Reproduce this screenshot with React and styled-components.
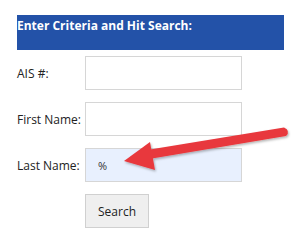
import React from 'react';
import styled, { createGlobalStyle } from 'styled-components';

const Global = createGlobalStyle`
  html, body {
    margin: 0;
    padding: 0;
    background: #ffffff;
  }
  body {
    font-family: "Open Sans", "Liberation Sans", sans-serif;
    color: #222;
  }
`;

const Page = styled.div`
  position: relative;
  width: 300px;
  height: 238px;
  padding: 15px 0 0 17px;
  box-sizing: border-box;
`;

const Header = styled.div`
  width: 267px;
  height: 35px;
  background: #2352a8;
  color: #ffffff;
  font-weight: 700;
  font-size: 12px;
  line-height: 16px;
  padding-top: 3px;
  box-sizing: border-box;
`;

const Form = styled.div`
  display: grid;
  grid-template-columns: 68px 157px;
  grid-auto-rows: 34px;
  row-gap: 12px;
  margin-top: 6px;
  align-items: center;
`;

const Label = styled.label`
  font-size: 12px;
  color: #222;
`;

const Field = styled.div`
  height: 34px;
  border: 1px solid #d6d6d6;
  box-sizing: border-box;
  background: ${(p) => (p.$filled ? '#e8f0fe' : '#ffffff')};
  display: flex;
  align-items: center;
  padding-left: 12px;
  font-size: 11px;
  color: #333;
`;

const Button = styled.button`
  grid-column: 2;
  justify-self: start;
  width: 64px;
  height: 34px;
  border: 1px solid #d0d0d0;
  background: #efefef;
  font-family: "Open Sans", "Liberation Sans", sans-serif;
  font-size: 12px;
  color: #222;
  padding: 0;
`;

const Arrow = styled.svg`
  position: absolute;
  left: 0;
  top: 0;
  pointer-events: none;
`;

export default function App() {
  return (
    <>
      <Global />
      <Page>
        <Header>Enter Criteria and Hit Search:</Header>
        <Form>
          <Label>AIS #:</Label>
          <Field />
          <Label>First Name:</Label>
          <Field />
          <Label>Last Name:</Label>
          <Field $filled>%</Field>
          <Button>Search</Button>
        </Form>
        <Arrow width="300" height="238" viewBox="0 0 300 238">
          <defs>
            <filter id="sh" x="-10%" y="-30%" width="120%" height="160%">
              <feDropShadow dx="1" dy="1.5" stdDeviation="1" floodColor="#000" floodOpacity="0.3" />
            </filter>
          </defs>
          <g filter="url(#sh)" fill="#e8383d">
            <path d="M284 127.5 L150 149.5 L152 158.5 L286 136 Q291 131 284 127.5 Z" />
            <path d="M124 161 L150 142 L155 170 Z" />
          </g>
        </Arrow>
      </Page>
    </>
  );
}
